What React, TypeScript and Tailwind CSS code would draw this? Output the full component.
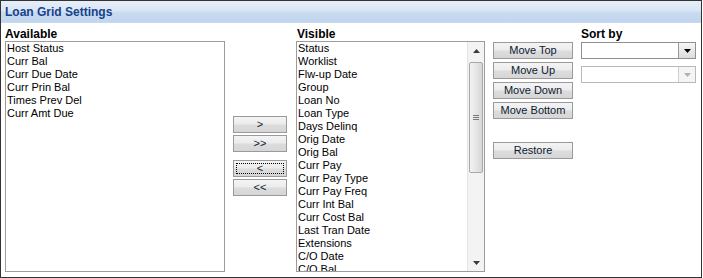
import React from "react";

const available = ["Host Status", "Curr Bal", "Curr Due Date", "Curr Prin Bal", "Times Prev Del", "Curr Amt Due"];
const visible = [
  "Status", "Worklist", "Flw-up Date", "Group", "Loan No", "Loan Type", "Days Delinq", "Orig Date", "Orig Bal",
  "Curr Pay", "Curr Pay Type", "Curr Pay Freq", "Curr Int Bal", "Curr Cost Bal", "Last Tran Date", "Extensions",
  "C/O Date", "C/O Bal",
];

const font = { fontFamily: '"Liberation Sans", Arial, sans-serif' };

function Btn({ children, focused, className = "" }: { children: React.ReactNode; focused?: boolean; className?: string }) {
  return (
    <div
      className={`h-[17px] border border-[#9a9a9a] bg-[linear-gradient(#f4f4f4_0%,#ececec_45%,#dcdcdc_55%,#d6d6d6_100%)] flex items-center justify-center text-[11px] leading-none text-[#0b1a33] ${className}`}
    >
      {focused ? (
        <div className="w-[calc(100%-4px)] h-[calc(100%-4px)] border border-dotted border-black flex items-center justify-center">
          {children}
        </div>
      ) : (
        children
      )}
    </div>
  );
}

function Arrow({ up, color }: { up?: boolean; color: string }) {
  return (
    <svg width="7" height="4" viewBox="0 0 7 4">
      {up ? <path d="M3.5 0 L7 4 L0 4 Z" fill={color} /> : <path d="M0 0 L7 0 L3.5 4 Z" fill={color} />}
    </svg>
  );
}

function Select({ disabled }: { disabled?: boolean }) {
  return (
    <div className={`h-[17px] w-[115px] border ${disabled ? "border-[#b8b8b8]" : "border-[#8f8f8f]"} bg-white flex justify-end`}>
      <div
        className={`w-[17px] h-full border-l ${disabled ? "border-[#d0d0d0] bg-[#f4f4f4]" : "border-[#9a9a9a] bg-[linear-gradient(#f6f6f6,#dcdcdc)]"} flex items-center justify-center`}
      >
        <Arrow color={disabled ? "#b0b0b0" : "#000"} />
      </div>
    </div>
  );
}

export default function App() {
  return (
    <div style={font} className="w-[702px] h-[278px] border border-[#333333] bg-white overflow-hidden flex flex-col">
      <div className="h-[22px] shrink-0 bg-[linear-gradient(#e6eef9_0%,#dbe6f4_45%,#c9dbf1_55%,#c0d5ef_100%)] border-b border-[#c9d9ee] flex items-center pl-[4px]">
        <span className="text-[12px] font-bold text-[#15428b] leading-none">Loan Grid Settings</span>
      </div>
      <div className="flex flex-1 pl-[4px]">
        {/* Available */}
        <div className="w-[220px] flex flex-col">
          <div className="h-[18px] flex items-center text-[12px] font-bold text-black leading-none pt-[3px]">Available</div>
          <div className="h-[231px] border border-[#9c9c9c] bg-white pl-[1px]">
            {available.map((t) => (
              <div key={t} className="h-[13px] text-[11px] leading-[13px] text-black whitespace-nowrap">{t}</div>
            ))}
          </div>
        </div>
        {/* arrows */}
        <div className="w-[54px] ml-[8px] flex flex-col pt-[93px]">
          <Btn>&gt;</Btn>
          <Btn className="mt-[2px]">&gt;&gt;</Btn>
          <Btn className="mt-[8px]" focused>&lt;</Btn>
          <Btn className="mt-[2px]">&lt;&lt;</Btn>
        </div>
        {/* Visible */}
        <div className="w-[189px] ml-[9px] flex flex-col">
          <div className="h-[18px] flex items-center text-[12px] font-bold text-black leading-none pt-[3px] pl-[1px]">Visible</div>
          <div className="h-[231px] border border-[#9c9c9c] bg-white flex overflow-hidden">
            <div className="flex-1 pl-[1px] overflow-hidden">
              {visible.map((t) => (
                <div key={t} className="h-[13px] text-[11px] leading-[13px] text-black whitespace-nowrap">{t}</div>
              ))}
            </div>
            <div className="w-[17px] h-full bg-[#f3f3f3] border-l border-[#e4e4e4] flex flex-col">
              <div className="h-[17px] flex items-center justify-center">
                <Arrow up color="#3a3a3a" />
              </div>
              <div className="mt-[3px] h-[111px] mx-[1px] rounded-[2px] border border-[#a8a8a8] bg-[linear-gradient(90deg,#f2f2f2,#e6e6e6_50%,#d6d6d6)] flex items-center justify-center">
                <div className="flex flex-col gap-[1px]">
                  <div className="w-[6px] h-[1px] bg-[#7a7a7a]" />
                  <div className="w-[6px] h-[1px] bg-[#7a7a7a]" />
                  <div className="w-[6px] h-[1px] bg-[#7a7a7a]" />
                </div>
              </div>
              <div className="flex-1" />
              <div className="h-[17px] flex items-center justify-center">
                <Arrow color="#3a3a3a" />
              </div>
            </div>
          </div>
        </div>
        {/* Move buttons */}
        <div className="w-[80px] ml-[8px] flex flex-col pt-[19px] gap-[3px]">
          <Btn>Move Top</Btn>
          <Btn>Move Up</Btn>
          <Btn>Move Down</Btn>
          <Btn>Move Bottom</Btn>
          <Btn className="mt-[20px]">Restore</Btn>
        </div>
        {/* Sort by */}
        <div className="w-[115px] ml-[8px] flex flex-col">
          <div className="h-[18px] flex items-center text-[12px] font-bold text-black leading-none pt-[3px]">Sort by</div>
          <div className="mt-[1px]">
            <Select />
          </div>
          <div className="mt-[7px]">
            <Select disabled />
          </div>
        </div>
      </div>
    </div>
  );
}
